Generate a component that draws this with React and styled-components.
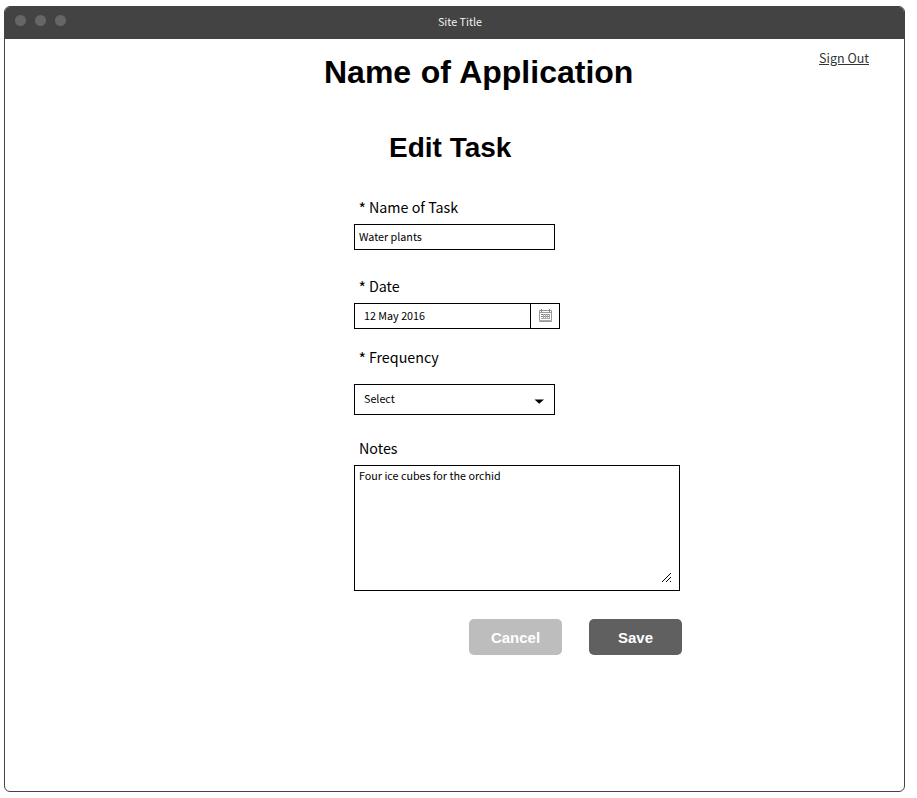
import React from 'react';
import styled, { createGlobalStyle } from 'styled-components';

const GlobalStyle = createGlobalStyle`
  *, *::before, *::after { box-sizing: border-box; }
  body {
    margin: 0;
    background: #fff;
    color: #000;
    font-family: "Noto Sans CJK SC", "Noto Sans", sans-serif;
  }
  h1, h2 {
    margin: 0;
    font-family: "Liberation Sans", Arial, sans-serif;
    font-weight: 700;
    white-space: nowrap;
  }
`;

const Page = styled.div`
  display: flex;
  padding: 6px 0 0 4px;
`;

const Window = styled.div`
  width: 901px;
  height: 786px;
  border: 1px solid #434343;
  border-radius: 6px;
  overflow: hidden;
`;

const TitleBar = styled.div`
  display: grid;
  grid-template-columns: 1fr auto 1fr;
  height: 32px;
  padding: 0 0 0 10px;
  background: #434343;
`;

const Dots = styled.div`
  display: flex;
  gap: 9px;
  padding-top: 8px;
`;

const Dot = styled.span`
  width: 11px;
  height: 11px;
  border-radius: 50%;
  background: #666;
`;

const SiteTitle = styled.div`
  padding-left: 1px;
  color: #f2f2f2;
  font-size: 10.75px;
  line-height: 30px;
`;

const TopRow = styled.header`
  display: flex;
  justify-content: space-between;
  height: 90px;
  padding: 0 35px 0 319px;
`;

const AppName = styled.h1`
  padding-top: 15px;
  font-size: 32px;
  line-height: 36px;
  word-spacing: 0.6px;
`;

const SignOut = styled.a`
  padding-top: 9px;
  color: #333;
  font-size: 12.5px;
  line-height: 20px;
  text-decoration: underline;
`;

const Form = styled.main`
  display: flex;
  flex-direction: column;
  align-items: flex-start;
  padding-left: 349px;
`;

const Heading = styled.h2`
  padding: 3px 0 0 35px;
  height: 67px;
  font-size: 28px;
  line-height: 32px;
`;

const Field = styled.div`
  display: flex;
  flex-direction: column;
  gap: ${(p) => p.$gap || 5}px;
  margin-bottom: ${(p) => p.$after}px;
`;

const Label = styled.label`
  height: 23px;
  padding-left: 5px;
  font-size: 14.3px;
  line-height: 22px;
  white-space: pre;
`;

const RequiredMark = styled.span`
  display: inline-block;
  width: 6.7px;
  font-size: 16px;
  line-height: 16px;
  transform: translate(-0.5px, 2px);
`;

const Box = styled.div`
  display: flex;
  justify-content: space-between;
  width: ${(p) => p.$width}px;
  height: ${(p) => p.$height}px;
  padding-left: ${(p) => p.$inset}px;
  border: 1px solid #000;
  font-size: 10.75px;
  line-height: ${(p) => p.$line}px;
`;

const CalendarButton = styled.span`
  display: flex;
  width: 29px;
  padding: 4px 0 0 7px;
  border-left: 1px solid #000;
`;

const Caret = styled.svg`
  margin: 14px 10px 0 0;
`;

const Grip = styled.svg`
  align-self: flex-end;
  margin: 0 7px 8px 0;
`;

const Actions = styled.div`
  display: flex;
  gap: 27px;
  margin-left: 115px;
`;

const Button = styled.button`
  width: 93px;
  height: 36px;
  padding: 1px 0 0;
  border: 0;
  border-radius: 5px;
  background: ${(p) => (p.$primary ? '#606060' : '#bdbdbd')};
  color: #fff;
  font: bold 15px/18px "Liberation Sans", Arial, sans-serif;
`;

function CalendarIcon() {
  return (
    <svg width="15" height="15" viewBox="0 0 15 15" fill="none" stroke="#999">
      <path d="M1.5 2.5h12v11h-12zM1 4.5h13" />
      <path d="M3.5 1v3M11.5 1v3" stroke="#888" />
      <path d="M3 6.5h9M3 8.5h9" stroke="#858585" />
      <path d="M3 10.5h9M5.5 6v5M7.5 6v5M9.5 6v5M11.5 6v5M1 12.5h13" stroke="#aaa" />
    </svg>
  );
}

// One-pixel steps running up and to the right from (x, y).
const steps = (x, y, count) =>
  Array.from({ length: count }, (_, i) => `M${x + i} ${y - i}h1v1h-1z`).join('');

function ResizeGrip() {
  return (
    <Grip width="10" height="10" viewBox="0 0 10 10" shapeRendering="crispEdges">
      <path d={steps(0, 9, 9) + steps(4, 9, 5) + steps(8, 9, 1)} />
    </Grip>
  );
}

export default function App() {
  return (
    <Page>
      <GlobalStyle />
      <Window>
        <TitleBar>
          <Dots><Dot /><Dot /><Dot /></Dots>
          <SiteTitle>Site Title</SiteTitle>
        </TitleBar>
        <TopRow>
          <AppName>Name of Application</AppName>
          <SignOut>Sign Out</SignOut>
        </TopRow>
        <Form>
          <Heading>Edit Task</Heading>
          <Field $after={25}>
            <Label><RequiredMark>*</RequiredMark> Name of Task</Label>
            <Box $width={201} $height={26} $inset={4} $line={24}>Water plants</Box>
          </Field>
          <Field $after={17}>
            <Label><RequiredMark>*</RequiredMark> Date</Label>
            <Box $width={206} $height={26} $inset={9} $line={24}>
              12 May 2016
              <CalendarButton><CalendarIcon /></CalendarButton>
            </Box>
          </Field>
          <Field $gap={15} $after={22}>
            <Label><RequiredMark>*</RequiredMark> Frequency</Label>
            <Box $width={201} $height={31} $inset={9} $line={28}>
              Select
              <Caret width="10" height="5" viewBox="0 0 10 5"><path d="M.5 .5h9.5L5.25 4.8z" /></Caret>
            </Box>
          </Field>
          <Field $after={28}>
            <Label>Notes</Label>
            <Box $width={326} $height={126} $inset={4} $line={20}>
              Four ice cubes for the orchid
              <ResizeGrip />
            </Box>
          </Field>
          <Actions>
            <Button>Cancel</Button>
            <Button $primary>Save</Button>
          </Actions>
        </Form>
      </Window>
    </Page>
  );
}
